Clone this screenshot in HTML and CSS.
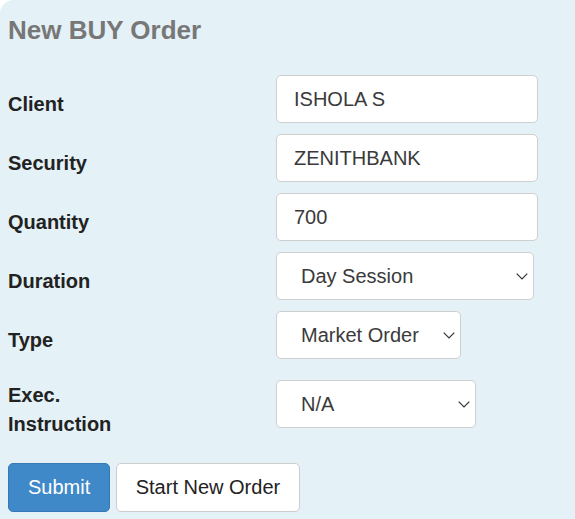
FILE: index.html
```html
<!DOCTYPE html>
<html lang="en">
<head>
<meta charset="utf-8">
<title>New BUY Order</title>
<link rel="stylesheet" href="styles.css">
</head>
<body>
<div class="panel">
  <h2 class="title">New BUY Order</h2>
  <form class="order-form">
    <div class="grid">
      <label class="label"><span>Client</span></label>
      <div class="ctrl"><input class="field w-262" type="text" value="ISHOLA S"></div>

      <label class="label"><span>Security</span></label>
      <div class="ctrl"><input class="field w-262" type="text" value="ZENITHBANK"></div>

      <label class="label"><span>Quantity</span></label>
      <div class="ctrl"><input class="field w-262" type="text" value="700"></div>

      <label class="label"><span>Duration</span></label>
      <div class="ctrl">
        <div class="select-wrap w-258">
          <select class="field select"><option>Day Session</option></select>
          <svg class="chev" width="12" height="7" viewBox="0 0 12 7"><path d="M0.7 0.7 L6 6 L11.3 0.7" fill="none" stroke="#333" stroke-width="1.2"/></svg>
        </div>
      </div>

      <label class="label"><span>Type</span></label>
      <div class="ctrl">
        <div class="select-wrap w-185">
          <select class="field select"><option>Market Order</option></select>
          <svg class="chev" width="12" height="7" viewBox="0 0 12 7"><path d="M0.7 0.7 L6 6 L11.3 0.7" fill="none" stroke="#333" stroke-width="1.2"/></svg>
        </div>
      </div>

      <label class="label"><span class="wrap">Exec. Instruction</span></label>
      <div class="ctrl">
        <div class="select-wrap w-200">
          <select class="field select"><option>N/A</option></select>
          <svg class="chev" width="12" height="7" viewBox="0 0 12 7"><path d="M0.7 0.7 L6 6 L11.3 0.7" fill="none" stroke="#333" stroke-width="1.2"/></svg>
        </div>
      </div>
    </div>
    <div class="actions">
      <button type="button" class="btn btn-primary">Submit</button>
      <button type="button" class="btn btn-default">Start New Order</button>
    </div>
  </form>
</div>
</body>
</html>
```
FILE: styles.css
```css
html, body {
  margin: 0;
  padding: 0;
  background: #ffffff;
}

body {
  font-family: "Liberation Sans", Arial, Helvetica, sans-serif;
  color: #222;
}

.panel {
  background: #e4f1f6;
  border-top-left-radius: 14px;
  min-height: 100vh;
  padding: 16px 8px 0 8px;
  box-sizing: border-box;
}

.title {
  margin: 0 0 31px 0;
  font-size: 26px;
  line-height: 28px;
  font-weight: bold;
  color: #777;
}

.order-form {
  margin: 0;
}

.grid {
  display: grid;
  grid-template-columns: 268px 1fr;
  align-items: center;
}

.label {
  display: block;
  padding: 11px 0;
  font-size: 20px;
  line-height: 28.6px;
  font-weight: bold;
  color: #222;
}

.label .wrap {
  display: block;
  max-width: 120px;
}

.ctrl {
  padding-bottom: 11px;
}

.field {
  display: block;
  box-sizing: border-box;
  height: 48px;
  margin: 0;
  padding: 0 17px;
  border: 1px solid #cfcfcf;
  border-radius: 5px;
  background: #fff;
  font-family: "Liberation Sans", Arial, Helvetica, sans-serif;
  font-size: 20px;
  color: #3a3a3a;
  outline: none;
}

.w-262 { width: 262px; }
.w-258 { width: 258px; }
.w-185 { width: 185px; }
.w-200 { width: 200px; }

.select-wrap {
  position: relative;
}

.select {
  width: 100%;
  -webkit-appearance: none;
  appearance: none;
  padding: 0 24px 0 24px;
}

.chev {
  position: absolute;
  right: 6px;
  top: 50%;
  margin-top: -3px;
  pointer-events: none;
}

.actions {
  margin-top: 14px;
  padding-bottom: 8px;
}

.btn {
  display: inline-block;
  box-sizing: border-box;
  height: 49px;
  margin: 0;
  padding: 0 19px;
  border: 1px solid transparent;
  border-radius: 5px;
  font-family: "Liberation Sans", Arial, Helvetica, sans-serif;
  font-size: 20px;
  line-height: 47px;
  vertical-align: middle;
  cursor: pointer;
}

.btn-primary {
  background: #4089c9;
  border-color: #3679b6;
  color: #fff;
}

.btn-default {
  background: #fff;
  border-color: #cdcdcd;
  color: #222;
  margin-left: 1px;
}
```
